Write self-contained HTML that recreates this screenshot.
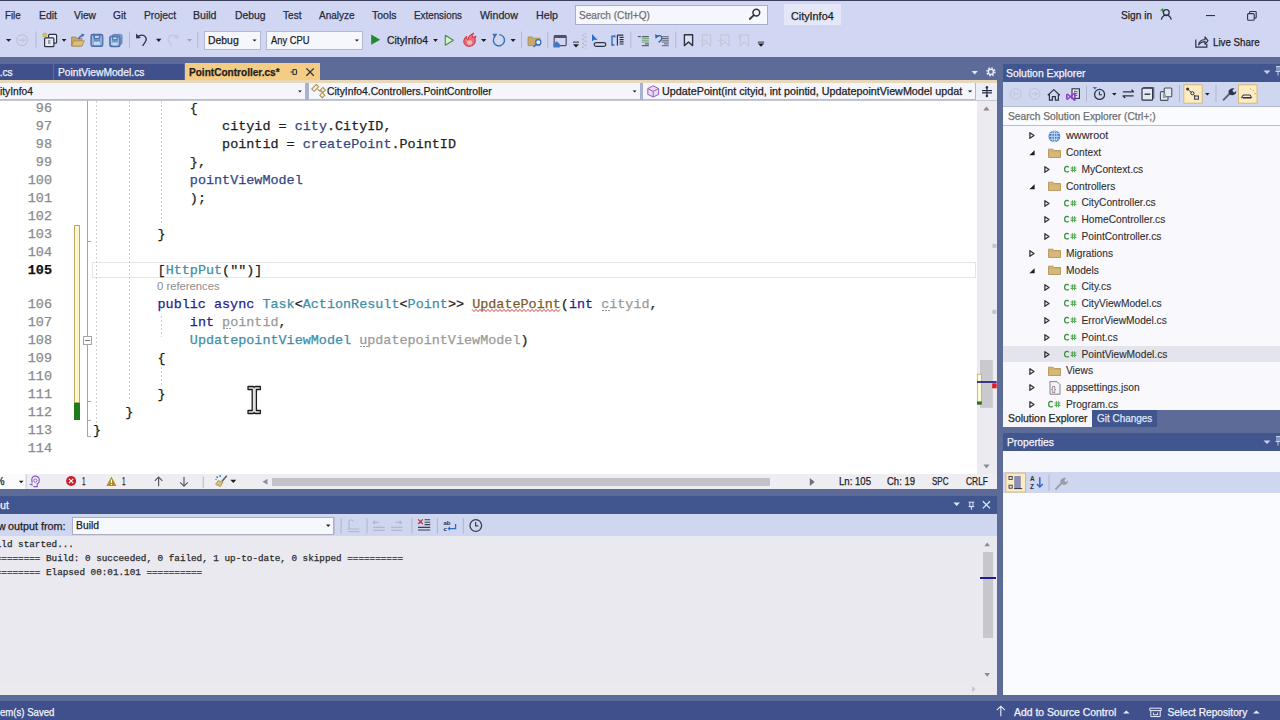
<!DOCTYPE html>
<html><head><meta charset="utf-8"><title>VS</title>
<style>
*{box-sizing:border-box;margin:0;padding:0}
html,body{width:1280px;height:720px;overflow:hidden;position:relative;background:#5d6b99;font-family:"Liberation Sans",sans-serif}
.a{position:absolute}
.t{white-space:pre;line-height:1;-webkit-text-stroke:0.25px currentColor}
.code{font-family:"Liberation Mono",monospace;font-size:13.45px;color:#1e1e1e}
svg{overflow:visible}
</style></head><body>
<div class="a" style="left:0px;top:0px;width:1280px;height:57px;background:#d1d7f2;"></div>
<div class="a" style="left:0px;top:0px;width:1280px;height:1px;background:#3b3f5c;"></div>
<div class="a t" style="left:5.30px;top:10.00px;font-size:10.800px;font-family:'Liberation Sans',sans-serif;font-weight:normal;color:#262a3a;transform:scaleX(0.9021);transform-origin:0 0;">File</div>
<div class="a t" style="left:39.00px;top:10.00px;font-size:10.800px;font-family:'Liberation Sans',sans-serif;font-weight:normal;color:#262a3a;transform:scaleX(0.9672);transform-origin:0 0;">Edit</div>
<div class="a t" style="left:74.00px;top:10.00px;font-size:10.800px;font-family:'Liberation Sans',sans-serif;font-weight:normal;color:#262a3a;transform:scaleX(0.9477);transform-origin:0 0;">View</div>
<div class="a t" style="left:113.00px;top:10.00px;font-size:10.800px;font-family:'Liberation Sans',sans-serif;font-weight:normal;color:#262a3a;transform:scaleX(0.9420);transform-origin:0 0;">Git</div>
<div class="a t" style="left:144.00px;top:10.00px;font-size:10.800px;font-family:'Liberation Sans',sans-serif;font-weight:normal;color:#262a3a;transform:scaleX(0.9520);transform-origin:0 0;">Project</div>
<div class="a t" style="left:193.00px;top:10.00px;font-size:10.800px;font-family:'Liberation Sans',sans-serif;font-weight:normal;color:#262a3a;transform:scaleX(0.9785);transform-origin:0 0;">Build</div>
<div class="a t" style="left:235.00px;top:10.00px;font-size:10.800px;font-family:'Liberation Sans',sans-serif;font-weight:normal;color:#262a3a;transform:scaleX(0.9615);transform-origin:0 0;">Debug</div>
<div class="a t" style="left:283.00px;top:10.00px;font-size:10.800px;font-family:'Liberation Sans',sans-serif;font-weight:normal;color:#262a3a;transform:scaleX(0.9340);transform-origin:0 0;">Test</div>
<div class="a t" style="left:319.00px;top:10.00px;font-size:10.800px;font-family:'Liberation Sans',sans-serif;font-weight:normal;color:#262a3a;transform:scaleX(0.9291);transform-origin:0 0;">Analyze</div>
<div class="a t" style="left:372.00px;top:10.00px;font-size:10.500px;font-family:'Liberation Sans',sans-serif;font-weight:normal;color:#262a3a;">Tools</div>
<div class="a t" style="left:414.00px;top:10.00px;font-size:10.800px;font-family:'Liberation Sans',sans-serif;font-weight:normal;color:#262a3a;transform:scaleX(0.9086);transform-origin:0 0;">Extensions</div>
<div class="a t" style="left:480.00px;top:10.00px;font-size:10.800px;font-family:'Liberation Sans',sans-serif;font-weight:normal;color:#262a3a;transform:scaleX(0.9893);transform-origin:0 0;">Window</div>
<div class="a t" style="left:536.00px;top:10.00px;font-size:10.800px;font-family:'Liberation Sans',sans-serif;font-weight:normal;color:#262a3a;transform:scaleX(0.9904);transform-origin:0 0;">Help</div>
<div class="a" style="left:575px;top:5px;width:193px;height:20px;background:#f6f7fc;border:1px solid #a9aec6"></div>
<div class="a t" style="left:579.00px;top:11.00px;font-size:10.200px;font-family:'Liberation Sans',sans-serif;font-weight:normal;color:#717171;transform:scaleX(0.9902);transform-origin:0 0;">Search (Ctrl+Q)</div>
<div class="a" style="left:784px;top:4px;width:57px;height:21px;background:#e3e7f7;"></div>
<div class="a t" style="left:791.00px;top:12.00px;font-size:10.200px;font-family:'Liberation Sans',sans-serif;font-weight:normal;color:#1e1e1e;transform:scaleX(1.0608);transform-origin:0 0;">CityInfo4</div>
<div class="a t" style="left:1121.00px;top:11.00px;font-size:10.200px;font-family:'Liberation Sans',sans-serif;font-weight:normal;color:#1e1e1e;">Sign in</div>
<div class="a" style="left:204px;top:31px;width:57px;height:19px;background:#f6f7fc;border:1px solid #b3b9cf"></div>
<div class="a t" style="left:208.00px;top:36.00px;font-size:10.200px;font-family:'Liberation Sans',sans-serif;font-weight:normal;color:#1e1e1e;transform:scaleX(1.0230);transform-origin:0 0;">Debug</div>
<div class="a" style="left:266px;top:31px;width:97px;height:19px;background:#f6f7fc;border:1px solid #b3b9cf"></div>
<div class="a t" style="left:270.50px;top:36.00px;font-size:10.200px;font-family:'Liberation Sans',sans-serif;font-weight:normal;color:#1e1e1e;transform:scaleX(0.9178);transform-origin:0 0;">Any CPU</div>
<div class="a t" style="left:387.00px;top:36.00px;font-size:10.200px;font-family:'Liberation Sans',sans-serif;font-weight:normal;color:#1e1e1e;transform:scaleX(1.0186);transform-origin:0 0;">CityInfo4</div>
<div class="a t" style="left:1213.00px;top:38.00px;font-size:10.200px;font-family:'Liberation Sans',sans-serif;font-weight:normal;color:#1e1e1e;transform:scaleX(0.9556);transform-origin:0 0;">Live Share</div>
<div class="a" style="left:0px;top:57px;width:997px;height:26px;background:#5d6b99;"></div>
<div class="a" style="left:0px;top:64px;width:184px;height:16px;background:#40508d;"></div>
<div class="a" style="left:53px;top:64px;width:1px;height:16px;background:#5d6b99;"></div>
<div class="a t" style="left:-3.17px;top:68.00px;font-size:10.200px;font-family:'Liberation Sans',sans-serif;font-weight:normal;color:#eef0fb;">t.cs</div>
<div class="a t" style="left:57.70px;top:68.00px;font-size:10.200px;font-family:'Liberation Sans',sans-serif;font-weight:normal;color:#eef0fb;transform:scaleX(1.0059);transform-origin:0 0;">PointViewModel.cs</div>
<div class="a" style="left:184.5px;top:63px;width:135px;height:17px;background:#f5cc84;"></div>
<div class="a t" style="left:188.80px;top:68.00px;font-size:10.200px;font-family:'Liberation Sans',sans-serif;font-weight:bold;color:#1e1e1e;transform:scaleX(0.9878);transform-origin:0 0;">PointController.cs*</div>
<div class="a" style="left:0px;top:80px;width:997px;height:2.6px;background:#e8d8b8;"></div>
<div class="a" style="left:0px;top:82.6px;width:997px;height:18.4px;background:#b9bdcd;"></div>
<div class="a" style="left:0px;top:82.6px;width:305px;height:16.4px;background:#f5f6fb;"></div>
<div class="a" style="left:309px;top:82.6px;width:331px;height:16.4px;background:#f5f6fb;"></div>
<div class="a" style="left:305px;top:82.6px;width:4px;height:17.4px;background:#a9b3cf;"></div>
<div class="a" style="left:640px;top:82.6px;width:3px;height:17.4px;background:#a9b3cf;"></div>
<div class="a" style="left:643px;top:82.6px;width:333px;height:16.4px;background:#f5f6fb;border-right:1px solid #b4b9cc"></div>
<div class="a" style="left:976px;top:82.6px;width:21px;height:17.4px;background:#eeeef6;"></div>
<div class="a t" style="left:-7.41px;top:87.00px;font-size:10.240px;font-family:'Liberation Sans',sans-serif;font-weight:normal;color:#1e1e1e;">CityInfo4</div>
<div class="a t" style="left:327.00px;top:87.00px;font-size:10.200px;font-family:'Liberation Sans',sans-serif;font-weight:normal;color:#1e1e1e;transform:scaleX(1.0141);transform-origin:0 0;">CityInfo4.Controllers.PointController</div>
<div class="a t" style="left:662.00px;top:87.00px;font-size:10.200px;font-family:'Liberation Sans',sans-serif;font-weight:normal;color:#1e1e1e;transform:scaleX(1.0564);transform-origin:0 0;">UpdatePoint(int cityid, int pointid, UpdatepointViewModel updat</div>
<div class="a" style="left:0px;top:101px;width:997px;height:373px;background:#ffffff;"></div>
<div class="a" style="left:0px;top:100px;width:997px;height:1px;background:#c5c8d4;"></div>
<div class="a t code" style="left:35.86px;top:102.00px;color:#8a8a8a;">96</div>
<div class="a t code" style="left:35.86px;top:120.00px;color:#8a8a8a;">97</div>
<div class="a t code" style="left:35.86px;top:138.00px;color:#8a8a8a;">98</div>
<div class="a t code" style="left:35.86px;top:156.00px;color:#8a8a8a;">99</div>
<div class="a t code" style="left:27.79px;top:174.00px;color:#8a8a8a;">100</div>
<div class="a t code" style="left:27.79px;top:192.00px;color:#8a8a8a;">101</div>
<div class="a t code" style="left:27.79px;top:210.00px;color:#8a8a8a;">102</div>
<div class="a t code" style="left:27.79px;top:228.00px;color:#8a8a8a;">103</div>
<div class="a t code" style="left:27.79px;top:246.00px;color:#8a8a8a;">104</div>
<div class="a t code" style="left:27.79px;top:264.00px;color:#111;font-weight:bold">105</div>
<div class="a t code" style="left:27.79px;top:298.00px;color:#8a8a8a;">106</div>
<div class="a t code" style="left:27.79px;top:316.00px;color:#8a8a8a;">107</div>
<div class="a t code" style="left:27.79px;top:334.00px;color:#8a8a8a;">108</div>
<div class="a t code" style="left:27.79px;top:352.00px;color:#8a8a8a;">109</div>
<div class="a t code" style="left:27.79px;top:370.00px;color:#8a8a8a;">110</div>
<div class="a t code" style="left:27.79px;top:388.00px;color:#8a8a8a;">111</div>
<div class="a t code" style="left:27.79px;top:406.00px;color:#8a8a8a;">112</div>
<div class="a t code" style="left:27.79px;top:424.00px;color:#8a8a8a;">113</div>
<div class="a t code" style="left:27.79px;top:442.00px;color:#8a8a8a;">114</div>
<div class="a" style="left:87px;top:101px;width:1px;height:336px;background:#a5a5a5;"></div>
<div class="a" style="left:87px;top:241px;width:4px;height:1px;background:#a5a5a5;"></div>
<div class="a" style="left:87px;top:401px;width:4px;height:1px;background:#a5a5a5;"></div>
<div class="a" style="left:87px;top:420px;width:4px;height:1px;background:#a5a5a5;"></div>
<div class="a" style="left:87px;top:436px;width:4px;height:1px;background:#a5a5a5;"></div>
<div class="a" style="left:82.5px;top:336px;width:9px;height:9px;background:#ffffff;border:1px solid #a5a5a5"></div>
<div class="a" style="left:84.5px;top:340px;width:5px;height:1px;background:#777;"></div>
<div class="a" style="left:74px;top:225px;width:5.5px;height:178px;background:#fbf6cc;border:1px solid #b8a860"></div>
<div class="a" style="left:74px;top:402.5px;width:5.5px;height:17.5px;background:#1e7b1e;"></div>
<div class="a" style="left:92px;top:262px;width:884px;height:16px;background:transparent;border:1px solid #e6e6e6"></div>
<div class="a" style="left:95.5px;top:101px;width:1px;height:335px;background:transparent;background-image:linear-gradient(#d0d0d0 50%,transparent 50%);background-size:1px 4px"></div>
<div class="a" style="left:128.5px;top:101px;width:1px;height:299px;background:transparent;background-image:linear-gradient(#d0d0d0 50%,transparent 50%);background-size:1px 4px"></div>
<div class="a" style="left:160.5px;top:101px;width:1px;height:122px;background:transparent;background-image:linear-gradient(#d0d0d0 50%,transparent 50%);background-size:1px 4px"></div>
<div class="a" style="left:160.5px;top:316px;width:1px;height:21px;background:transparent;background-image:linear-gradient(#d0d0d0 50%,transparent 50%);background-size:1px 4px"></div>
<div class="a" style="left:160.5px;top:363px;width:1px;height:24px;background:transparent;background-image:linear-gradient(#d0d0d0 50%,transparent 50%);background-size:1px 4px"></div>
<div class="a t code" style="left:189.84px;top:102.00px"><span style="color:#1e1e1e">{</span></div>
<div class="a t code" style="left:222.12px;top:120.00px"><span style="color:#1e1e1e">cityid = </span><span style="color:#35477f">city</span><span style="color:#1e1e1e">.CityID,</span></div>
<div class="a t code" style="left:222.12px;top:138.00px"><span style="color:#1e1e1e">pointid = </span><span style="color:#35477f">createPoint</span><span style="color:#1e1e1e">.PointID</span></div>
<div class="a t code" style="left:189.84px;top:156.00px"><span style="color:#1e1e1e">},</span></div>
<div class="a t code" style="left:189.84px;top:174.00px"><span style="color:#35477f">pointViewModel</span></div>
<div class="a t code" style="left:189.84px;top:192.00px"><span style="color:#1e1e1e">);</span></div>
<div class="a t code" style="left:157.56px;top:228.00px"><span style="color:#1e1e1e">}</span></div>
<div class="a t code" style="left:157.56px;top:264.00px"><span style="color:#1e1e1e">[</span><span style="color:#3d8ea8">HttpPut</span><span style="color:#1e1e1e">(&quot;&quot;)]</span></div>
<div class="a t" style="left:157.30px;top:282.00px;font-size:10.400px;font-family:'Liberation Sans',sans-serif;font-weight:normal;color:#8c8c8c;transform:scaleX(1.0846);transform-origin:0 0;-webkit-text-stroke:0">0 references</div>
<div class="a t code" style="left:157.56px;top:298.00px"><span style="color:#1f1f8f">public async </span><span style="color:#3d8ea8">Task</span><span style="color:#1e1e1e">&lt;</span><span style="color:#3d8ea8">ActionResult</span><span style="color:#1e1e1e">&lt;</span><span style="color:#3d8ea8">Point</span><span style="color:#1e1e1e">&gt;&gt; </span><span style="color:#7a5a2a">UpdatePoint</span><span style="color:#1e1e1e">(</span><span style="color:#1f1f8f">int </span><span style="color:#9a9a9a">cityid</span><span style="color:#1e1e1e">,</span></div>
<div class="a t code" style="left:189.84px;top:316.00px"><span style="color:#1f1f8f">int </span><span style="color:#9a9a9a">pointid</span><span style="color:#1e1e1e">,</span></div>
<div class="a t code" style="left:189.84px;top:334.00px"><span style="color:#3d8ea8">UpdatepointViewModel </span><span style="color:#9a9a9a">updatepointViewModel</span><span style="color:#1e1e1e">)</span></div>
<div class="a t code" style="left:157.56px;top:352.00px"><span style="color:#1e1e1e">{</span></div>
<div class="a t code" style="left:157.56px;top:388.00px"><span style="color:#1e1e1e">}</span></div>
<div class="a t code" style="left:125.28px;top:406.00px"><span style="color:#1e1e1e">}</span></div>
<div class="a t code" style="left:93.0px;top:424.00px"><span style="color:#1e1e1e">}</span></div>
<svg class="a" style="left:472.29px;top:309px;" width="88.77000000000001" height="3" viewBox="0 0 88.77000000000001 3"><polyline points="0,0.3 2,2.6 4,0.3 6,2.6 8,0.3 10,2.6 12,0.3 14,2.6 16,0.3 18,2.6 20,0.3 22,2.6 24,0.3 26,2.6 28,0.3 30,2.6 32,0.3 34,2.6 36,0.3 38,2.6 40,0.3 42,2.6 44,0.3 46,2.6 48,0.3 50,2.6 52,0.3 54,2.6 56,0.3 58,2.6 60,0.3 62,2.6 64,0.3 66,2.6 68,0.3 70,2.6 72,0.3 74,2.6 76,0.3 78,2.6 80,0.3 82,2.6 84,0.3 86,2.6 88,0.3" fill="none" stroke="#d84848" stroke-width="1"/></svg>
<div class="a" style="left:602.4100000000001px;top:310.3px;width:1.5px;height:1.2px;background:#999;"></div>
<div class="a" style="left:605.4100000000001px;top:310.3px;width:1.5px;height:1.2px;background:#999;"></div>
<div class="a" style="left:608.4100000000001px;top:310.3px;width:1.5px;height:1.2px;background:#999;"></div>
<div class="a" style="left:223.12px;top:328.3px;width:1.5px;height:1.2px;background:#999;"></div>
<div class="a" style="left:226.12px;top:328.3px;width:1.5px;height:1.2px;background:#999;"></div>
<div class="a" style="left:229.12px;top:328.3px;width:1.5px;height:1.2px;background:#999;"></div>
<div class="a" style="left:360.31px;top:346.3px;width:1.5px;height:1.2px;background:#999;"></div>
<div class="a" style="left:363.31px;top:346.3px;width:1.5px;height:1.2px;background:#999;"></div>
<div class="a" style="left:366.31px;top:346.3px;width:1.5px;height:1.2px;background:#999;"></div>
<div class="a" style="left:977px;top:101px;width:20px;height:373px;background:#ecebf1;"></div>
<div class="a" style="left:0px;top:474px;width:997px;height:14.5px;background:#eeedf2;"></div>
<div class="a" style="left:0px;top:474px;width:26px;height:15px;background:#fbfbfd;"></div>
<div class="a t" style="left:-4.50px;top:477.00px;font-size:10.200px;font-family:'Liberation Sans',sans-serif;font-weight:normal;color:#1e1e1e;">%</div>
<div class="a t" style="left:82.00px;top:477.00px;font-size:10.200px;font-family:'Liberation Sans',sans-serif;font-weight:normal;color:#1e1e1e;transform:scaleX(0.6170);transform-origin:0 0;">1</div>
<div class="a t" style="left:122.00px;top:477.00px;font-size:10.200px;font-family:'Liberation Sans',sans-serif;font-weight:normal;color:#1e1e1e;transform:scaleX(0.6170);transform-origin:0 0;">1</div>
<div class="a" style="left:203px;top:477px;width:1px;height:11px;background:#c4c4cc;"></div>
<div class="a" style="left:272px;top:477.5px;width:498px;height:8px;background:#c2c3ca;"></div>
<div class="a t" style="left:839.00px;top:477.00px;font-size:10.200px;font-family:'Liberation Sans',sans-serif;font-weight:normal;color:#1e1e1e;transform:scaleX(0.9403);transform-origin:0 0;">Ln: 105</div>
<div class="a t" style="left:887.00px;top:477.00px;font-size:10.200px;font-family:'Liberation Sans',sans-serif;font-weight:normal;color:#1e1e1e;transform:scaleX(0.9317);transform-origin:0 0;">Ch: 19</div>
<div class="a t" style="left:932.00px;top:477.00px;font-size:10.200px;font-family:'Liberation Sans',sans-serif;font-weight:normal;color:#1e1e1e;transform:scaleX(0.7867);transform-origin:0 0;">SPC</div>
<div class="a t" style="left:966.00px;top:477.00px;font-size:10.200px;font-family:'Liberation Sans',sans-serif;font-weight:normal;color:#1e1e1e;transform:scaleX(0.8259);transform-origin:0 0;">CRLF</div>
<div class="a" style="left:0px;top:496.3px;width:997px;height:18px;background:#41558f;"></div>
<div class="a t" style="left:-21.72px;top:501.00px;font-size:10.200px;font-family:'Liberation Sans',sans-serif;font-weight:normal;color:#f2f4fc;">Output</div>
<div class="a" style="left:0px;top:514.3px;width:997px;height:22px;background:#cfd6f0;"></div>
<div class="a t" style="left:8.40px;top:522.00px;font-size:10.200px;font-family:'Liberation Sans',sans-serif;font-weight:normal;color:#1e1e1e;transform:scaleX(1.0583);transform-origin:0 0;">output from:</div>
<div class="a t" style="left:-19.95px;top:522.00px;font-size:10.200px;font-family:'Liberation Sans',sans-serif;font-weight:normal;color:#1e1e1e;">Show </div>
<div class="a" style="left:72px;top:517px;width:262px;height:17.5px;background:#f7f8fc;border:1px solid #a9aec4"></div>
<div class="a t" style="left:75.90px;top:521.00px;font-size:10.200px;font-family:'Liberation Sans',sans-serif;font-weight:normal;color:#1e1e1e;transform:scaleX(1.0140);transform-origin:0 0;">Build</div>
<div class="a" style="left:0px;top:536.3px;width:997px;height:158.7px;background:#e9e9ef;"></div>
<div class="a" style="left:0px;top:683px;width:997px;height:12px;background:#ece9ef;"></div>
<div class="a t" style="left:-15.4px;top:540px;font-family:'Liberation Mono',monospace;font-size:9.300px;color:#2b2b2b">Build started...</div>
<div class="a t" style="left:-15.4px;top:554px;font-family:'Liberation Mono',monospace;font-size:9.300px;color:#2b2b2b">========== Build: 0 succeeded, 0 failed, 1 up-to-date, 0 skipped ==========</div>
<div class="a t" style="left:-15.4px;top:568px;font-family:'Liberation Mono',monospace;font-size:9.300px;color:#2b2b2b">========== Elapsed 00:01.101 ==========</div>
<div class="a" style="left:980px;top:537px;width:17px;height:146px;background:#e9e9ef;"></div>
<div class="a" style="left:983px;top:552.4px;width:10px;height:85.6px;background:#c6c6cc;"></div>
<div class="a" style="left:980px;top:577px;width:16px;height:1.5px;background:#1a1aa0;"></div>
<div class="a" style="left:0px;top:700.5px;width:1280px;height:19.5px;background:#40508d;"></div>
<div class="a t" style="left:0.00px;top:708.00px;font-size:10.200px;font-family:'Liberation Sans',sans-serif;font-weight:normal;color:#f2f4fc;transform:scaleX(0.9408);transform-origin:0 0;">em(s) Saved</div>
<div class="a t" style="left:1014.00px;top:708.00px;font-size:10.200px;font-family:'Liberation Sans',sans-serif;font-weight:normal;color:#f2f4fc;transform:scaleX(1.0203);transform-origin:0 0;">Add to Source Control</div>
<div class="a t" style="left:1167.50px;top:708.00px;font-size:10.200px;font-family:'Liberation Sans',sans-serif;font-weight:normal;color:#f2f4fc;">Select Repository</div>
<div class="a" style="left:1003px;top:64px;width:277px;height:18px;background:#41558f;"></div>
<div class="a t" style="left:1006.40px;top:69.00px;font-size:10.200px;font-family:'Liberation Sans',sans-serif;font-weight:normal;color:#f2f4fc;transform:scaleX(1.0247);transform-origin:0 0;">Solution Explorer</div>
<svg class="a" style="left:1263px;top:70px;" width="8" height="5" viewBox="0 0 8 5"><path d="M0.5,0.5 h7 l-3.5,3.6 z" fill="#c8d2f2"/></svg>
<svg class="a" style="left:1275px;top:66px;" width="6" height="11" viewBox="0 0 6 11"><path d="M1,0.5 h4 M2,0.5 v5 h2 v-5 M0.5,5.5 h5 M3,5.5 v4" fill="none" stroke="#c8d2f2" stroke-width="1"/></svg>
<div class="a" style="left:1003px;top:82px;width:277px;height:24px;background:#cfd6f0;"></div>
<div class="a" style="left:1003px;top:106px;width:277px;height:1px;background:#b4b9cc;"></div>
<div class="a" style="left:1003px;top:107px;width:277px;height:18px;background:#fafbfe;"></div>
<div class="a" style="left:1003px;top:124.5px;width:277px;height:1.5px;background:#b9bdcc;"></div>
<div class="a t" style="left:1008.00px;top:112.00px;font-size:10.200px;font-family:'Liberation Sans',sans-serif;font-weight:normal;color:#707070;transform:scaleX(1.0047);transform-origin:0 0;">Search Solution Explorer (Ctrl+;)</div>
<div class="a" style="left:1003px;top:126px;width:277px;height:283.5px;background:#f9f9fd;"></div>
<div class="a" style="left:1003px;top:345.5px;width:277px;height:16.3px;background:#e3e4ec;"></div>
<svg class="a" style="left:1028.5px;top:132.29999999999998px;" width="7" height="8" viewBox="0 0 7 8"><path d="M0.9,0.7 L5,3.5 L0.9,6.3 Z" fill="none" stroke="#333" stroke-width="1.3" stroke-linejoin="round"/></svg>
<svg class="a" style="left:1048px;top:129.79999999999998px;" width="13" height="13" viewBox="0 0 13 13"><circle cx="6.4" cy="6.3" r="5.9" fill="#3f7fcf"/><g stroke="#dbe8f8" stroke-width="0.8" fill="none"><ellipse cx="6.4" cy="6.3" rx="2.6" ry="5.9"/><path d="M0.7,6.3 h11.4 M1.5,3.4 h9.8 M1.5,9.2 h9.8 M6.4,0.4 v11.8"/></g></svg>
<div class="a t" style="left:1066.00px;top:131.00px;font-size:10.200px;font-family:'Liberation Sans',sans-serif;font-weight:normal;color:#2e2e2e;transform:scaleX(1.0661);transform-origin:0 0;-webkit-text-stroke:0.1px currentColor">wwwroot</div>
<svg class="a" style="left:1028.75px;top:150.4px;" width="6" height="6" viewBox="0 0 6 6"><path d="M5.6,0.3 L5.6,5.2 L0.4,5.2 Z" fill="#1e1e1e"/></svg>
<svg class="a" style="left:1048px;top:147.5px;" width="13" height="10" viewBox="0 0 13 10"><path d="M0.5,1.2 h4.5 l1.2,1.3 h6.3 v7 h-12 Z" fill="#d8b878" stroke="#b39555" stroke-width="0.9"/><path d="M0.5,3.2 h12" stroke="#c4a462" stroke-width="0.6"/></svg>
<div class="a t" style="left:1066.00px;top:148.00px;font-size:10.200px;font-family:'Liberation Sans',sans-serif;font-weight:normal;color:#2e2e2e;-webkit-text-stroke:0.1px currentColor">Context</div>
<svg class="a" style="left:1044.0px;top:165.89999999999998px;" width="7" height="8" viewBox="0 0 7 8"><path d="M0.9,0.7 L5,3.5 L0.9,6.3 Z" fill="none" stroke="#333" stroke-width="1.3" stroke-linejoin="round"/></svg>
<svg class="a" style="left:1063.8px;top:165.89999999999998px;" width="14" height="8" viewBox="0 0 14 8"><path d="M4.8,1.2 Q3.8,0.3 2.8,0.4 Q0.6,0.6 0.6,3.2 Q0.6,5.8 2.8,6 Q3.8,6.1 4.8,5.2" fill="none" stroke="#3c8f3c" stroke-width="1.2"/><path d="M6.6,2 h5.8 M6.6,4.4 h5.8 M8.4,0.2 v6 M10.6,0.2 v6" stroke="#5aa85a" stroke-width="1.1"/></svg>
<div class="a t" style="left:1081.50px;top:165.00px;font-size:10.200px;font-family:'Liberation Sans',sans-serif;font-weight:normal;color:#2e2e2e;-webkit-text-stroke:0.1px currentColor">MyContext.cs</div>
<svg class="a" style="left:1028.75px;top:184.0px;" width="6" height="6" viewBox="0 0 6 6"><path d="M5.6,0.3 L5.6,5.2 L0.4,5.2 Z" fill="#1e1e1e"/></svg>
<svg class="a" style="left:1048px;top:181.1px;" width="13" height="10" viewBox="0 0 13 10"><path d="M0.5,1.2 h4.5 l1.2,1.3 h6.3 v7 h-12 Z" fill="#d8b878" stroke="#b39555" stroke-width="0.9"/><path d="M0.5,3.2 h12" stroke="#c4a462" stroke-width="0.6"/></svg>
<div class="a t" style="left:1066.00px;top:182.00px;font-size:10.200px;font-family:'Liberation Sans',sans-serif;font-weight:normal;color:#2e2e2e;-webkit-text-stroke:0.1px currentColor">Controllers</div>
<svg class="a" style="left:1044.0px;top:199.5px;" width="7" height="8" viewBox="0 0 7 8"><path d="M0.9,0.7 L5,3.5 L0.9,6.3 Z" fill="none" stroke="#333" stroke-width="1.3" stroke-linejoin="round"/></svg>
<svg class="a" style="left:1063.8px;top:199.5px;" width="14" height="8" viewBox="0 0 14 8"><path d="M4.8,1.2 Q3.8,0.3 2.8,0.4 Q0.6,0.6 0.6,3.2 Q0.6,5.8 2.8,6 Q3.8,6.1 4.8,5.2" fill="none" stroke="#3c8f3c" stroke-width="1.2"/><path d="M6.6,2 h5.8 M6.6,4.4 h5.8 M8.4,0.2 v6 M10.6,0.2 v6" stroke="#5aa85a" stroke-width="1.1"/></svg>
<div class="a t" style="left:1081.50px;top:198.00px;font-size:10.200px;font-family:'Liberation Sans',sans-serif;font-weight:normal;color:#2e2e2e;-webkit-text-stroke:0.1px currentColor">CityController.cs</div>
<svg class="a" style="left:1044.0px;top:216.29999999999998px;" width="7" height="8" viewBox="0 0 7 8"><path d="M0.9,0.7 L5,3.5 L0.9,6.3 Z" fill="none" stroke="#333" stroke-width="1.3" stroke-linejoin="round"/></svg>
<svg class="a" style="left:1063.8px;top:216.29999999999998px;" width="14" height="8" viewBox="0 0 14 8"><path d="M4.8,1.2 Q3.8,0.3 2.8,0.4 Q0.6,0.6 0.6,3.2 Q0.6,5.8 2.8,6 Q3.8,6.1 4.8,5.2" fill="none" stroke="#3c8f3c" stroke-width="1.2"/><path d="M6.6,2 h5.8 M6.6,4.4 h5.8 M8.4,0.2 v6 M10.6,0.2 v6" stroke="#5aa85a" stroke-width="1.1"/></svg>
<div class="a t" style="left:1081.50px;top:215.00px;font-size:10.200px;font-family:'Liberation Sans',sans-serif;font-weight:normal;color:#2e2e2e;-webkit-text-stroke:0.1px currentColor">HomeController.cs</div>
<svg class="a" style="left:1044.0px;top:233.1px;" width="7" height="8" viewBox="0 0 7 8"><path d="M0.9,0.7 L5,3.5 L0.9,6.3 Z" fill="none" stroke="#333" stroke-width="1.3" stroke-linejoin="round"/></svg>
<svg class="a" style="left:1063.8px;top:233.1px;" width="14" height="8" viewBox="0 0 14 8"><path d="M4.8,1.2 Q3.8,0.3 2.8,0.4 Q0.6,0.6 0.6,3.2 Q0.6,5.8 2.8,6 Q3.8,6.1 4.8,5.2" fill="none" stroke="#3c8f3c" stroke-width="1.2"/><path d="M6.6,2 h5.8 M6.6,4.4 h5.8 M8.4,0.2 v6 M10.6,0.2 v6" stroke="#5aa85a" stroke-width="1.1"/></svg>
<div class="a t" style="left:1081.50px;top:232.00px;font-size:10.200px;font-family:'Liberation Sans',sans-serif;font-weight:normal;color:#2e2e2e;-webkit-text-stroke:0.1px currentColor">PointController.cs</div>
<svg class="a" style="left:1028.5px;top:249.89999999999998px;" width="7" height="8" viewBox="0 0 7 8"><path d="M0.9,0.7 L5,3.5 L0.9,6.3 Z" fill="none" stroke="#333" stroke-width="1.3" stroke-linejoin="round"/></svg>
<svg class="a" style="left:1048px;top:248.29999999999998px;" width="13" height="10" viewBox="0 0 13 10"><path d="M0.5,1.2 h4.5 l1.2,1.3 h6.3 v7 h-12 Z" fill="#d8b878" stroke="#b39555" stroke-width="0.9"/><path d="M0.5,3.2 h12" stroke="#c4a462" stroke-width="0.6"/></svg>
<div class="a t" style="left:1066.00px;top:249.00px;font-size:10.200px;font-family:'Liberation Sans',sans-serif;font-weight:normal;color:#2e2e2e;-webkit-text-stroke:0.1px currentColor">Migrations</div>
<svg class="a" style="left:1028.75px;top:268.0px;" width="6" height="6" viewBox="0 0 6 6"><path d="M5.6,0.3 L5.6,5.2 L0.4,5.2 Z" fill="#1e1e1e"/></svg>
<svg class="a" style="left:1048px;top:265.1px;" width="13" height="10" viewBox="0 0 13 10"><path d="M0.5,1.2 h4.5 l1.2,1.3 h6.3 v7 h-12 Z" fill="#d8b878" stroke="#b39555" stroke-width="0.9"/><path d="M0.5,3.2 h12" stroke="#c4a462" stroke-width="0.6"/></svg>
<div class="a t" style="left:1066.00px;top:266.00px;font-size:10.200px;font-family:'Liberation Sans',sans-serif;font-weight:normal;color:#2e2e2e;-webkit-text-stroke:0.1px currentColor">Models</div>
<svg class="a" style="left:1044.0px;top:283.5px;" width="7" height="8" viewBox="0 0 7 8"><path d="M0.9,0.7 L5,3.5 L0.9,6.3 Z" fill="none" stroke="#333" stroke-width="1.3" stroke-linejoin="round"/></svg>
<svg class="a" style="left:1063.8px;top:283.5px;" width="14" height="8" viewBox="0 0 14 8"><path d="M4.8,1.2 Q3.8,0.3 2.8,0.4 Q0.6,0.6 0.6,3.2 Q0.6,5.8 2.8,6 Q3.8,6.1 4.8,5.2" fill="none" stroke="#3c8f3c" stroke-width="1.2"/><path d="M6.6,2 h5.8 M6.6,4.4 h5.8 M8.4,0.2 v6 M10.6,0.2 v6" stroke="#5aa85a" stroke-width="1.1"/></svg>
<div class="a t" style="left:1081.50px;top:282.00px;font-size:10.200px;font-family:'Liberation Sans',sans-serif;font-weight:normal;color:#2e2e2e;-webkit-text-stroke:0.1px currentColor">City.cs</div>
<svg class="a" style="left:1044.0px;top:300.3px;" width="7" height="8" viewBox="0 0 7 8"><path d="M0.9,0.7 L5,3.5 L0.9,6.3 Z" fill="none" stroke="#333" stroke-width="1.3" stroke-linejoin="round"/></svg>
<svg class="a" style="left:1063.8px;top:300.3px;" width="14" height="8" viewBox="0 0 14 8"><path d="M4.8,1.2 Q3.8,0.3 2.8,0.4 Q0.6,0.6 0.6,3.2 Q0.6,5.8 2.8,6 Q3.8,6.1 4.8,5.2" fill="none" stroke="#3c8f3c" stroke-width="1.2"/><path d="M6.6,2 h5.8 M6.6,4.4 h5.8 M8.4,0.2 v6 M10.6,0.2 v6" stroke="#5aa85a" stroke-width="1.1"/></svg>
<div class="a t" style="left:1081.50px;top:299.00px;font-size:10.200px;font-family:'Liberation Sans',sans-serif;font-weight:normal;color:#2e2e2e;-webkit-text-stroke:0.1px currentColor">CityViewModel.cs</div>
<svg class="a" style="left:1044.0px;top:317.09999999999997px;" width="7" height="8" viewBox="0 0 7 8"><path d="M0.9,0.7 L5,3.5 L0.9,6.3 Z" fill="none" stroke="#333" stroke-width="1.3" stroke-linejoin="round"/></svg>
<svg class="a" style="left:1063.8px;top:317.09999999999997px;" width="14" height="8" viewBox="0 0 14 8"><path d="M4.8,1.2 Q3.8,0.3 2.8,0.4 Q0.6,0.6 0.6,3.2 Q0.6,5.8 2.8,6 Q3.8,6.1 4.8,5.2" fill="none" stroke="#3c8f3c" stroke-width="1.2"/><path d="M6.6,2 h5.8 M6.6,4.4 h5.8 M8.4,0.2 v6 M10.6,0.2 v6" stroke="#5aa85a" stroke-width="1.1"/></svg>
<div class="a t" style="left:1081.50px;top:316.00px;font-size:10.200px;font-family:'Liberation Sans',sans-serif;font-weight:normal;color:#2e2e2e;-webkit-text-stroke:0.1px currentColor">ErrorViewModel.cs</div>
<svg class="a" style="left:1044.0px;top:333.90000000000003px;" width="7" height="8" viewBox="0 0 7 8"><path d="M0.9,0.7 L5,3.5 L0.9,6.3 Z" fill="none" stroke="#333" stroke-width="1.3" stroke-linejoin="round"/></svg>
<svg class="a" style="left:1063.8px;top:333.90000000000003px;" width="14" height="8" viewBox="0 0 14 8"><path d="M4.8,1.2 Q3.8,0.3 2.8,0.4 Q0.6,0.6 0.6,3.2 Q0.6,5.8 2.8,6 Q3.8,6.1 4.8,5.2" fill="none" stroke="#3c8f3c" stroke-width="1.2"/><path d="M6.6,2 h5.8 M6.6,4.4 h5.8 M8.4,0.2 v6 M10.6,0.2 v6" stroke="#5aa85a" stroke-width="1.1"/></svg>
<div class="a t" style="left:1081.50px;top:333.00px;font-size:10.200px;font-family:'Liberation Sans',sans-serif;font-weight:normal;color:#2e2e2e;-webkit-text-stroke:0.1px currentColor">Point.cs</div>
<svg class="a" style="left:1044.0px;top:350.7px;" width="7" height="8" viewBox="0 0 7 8"><path d="M0.9,0.7 L5,3.5 L0.9,6.3 Z" fill="none" stroke="#333" stroke-width="1.3" stroke-linejoin="round"/></svg>
<svg class="a" style="left:1063.8px;top:350.7px;" width="14" height="8" viewBox="0 0 14 8"><path d="M4.8,1.2 Q3.8,0.3 2.8,0.4 Q0.6,0.6 0.6,3.2 Q0.6,5.8 2.8,6 Q3.8,6.1 4.8,5.2" fill="none" stroke="#3c8f3c" stroke-width="1.2"/><path d="M6.6,2 h5.8 M6.6,4.4 h5.8 M8.4,0.2 v6 M10.6,0.2 v6" stroke="#5aa85a" stroke-width="1.1"/></svg>
<div class="a t" style="left:1081.50px;top:350.00px;font-size:10.200px;font-family:'Liberation Sans',sans-serif;font-weight:normal;color:#2e2e2e;-webkit-text-stroke:0.1px currentColor">PointViewModel.cs</div>
<svg class="a" style="left:1028.5px;top:367.5px;" width="7" height="8" viewBox="0 0 7 8"><path d="M0.9,0.7 L5,3.5 L0.9,6.3 Z" fill="none" stroke="#333" stroke-width="1.3" stroke-linejoin="round"/></svg>
<svg class="a" style="left:1048px;top:365.90000000000003px;" width="13" height="10" viewBox="0 0 13 10"><path d="M0.5,1.2 h4.5 l1.2,1.3 h6.3 v7 h-12 Z" fill="#d8b878" stroke="#b39555" stroke-width="0.9"/><path d="M0.5,3.2 h12" stroke="#c4a462" stroke-width="0.6"/></svg>
<div class="a t" style="left:1066.00px;top:366.00px;font-size:10.200px;font-family:'Liberation Sans',sans-serif;font-weight:normal;color:#2e2e2e;-webkit-text-stroke:0.1px currentColor">Views</div>
<svg class="a" style="left:1028.5px;top:384.3px;" width="7" height="8" viewBox="0 0 7 8"><path d="M0.9,0.7 L5,3.5 L0.9,6.3 Z" fill="none" stroke="#333" stroke-width="1.3" stroke-linejoin="round"/></svg>
<svg class="a" style="left:1049px;top:381.1px;" width="12" height="14" viewBox="0 0 12 14"><path d="M1,0.6 h7 l3,3 v9.6 h-10 Z" fill="#f4f4f6" stroke="#777" stroke-width="0.9"/><text x="2.2" y="10.4" font-family="Liberation Sans" font-size="7" fill="#555">{}</text></svg>
<div class="a t" style="left:1066.00px;top:383.00px;font-size:10.200px;font-family:'Liberation Sans',sans-serif;font-weight:normal;color:#2e2e2e;-webkit-text-stroke:0.1px currentColor">appsettings.json</div>
<svg class="a" style="left:1028.5px;top:401.09999999999997px;" width="7" height="8" viewBox="0 0 7 8"><path d="M0.9,0.7 L5,3.5 L0.9,6.3 Z" fill="none" stroke="#333" stroke-width="1.3" stroke-linejoin="round"/></svg>
<svg class="a" style="left:1048.3px;top:401.09999999999997px;" width="14" height="8" viewBox="0 0 14 8"><path d="M4.8,1.2 Q3.8,0.3 2.8,0.4 Q0.6,0.6 0.6,3.2 Q0.6,5.8 2.8,6 Q3.8,6.1 4.8,5.2" fill="none" stroke="#3c8f3c" stroke-width="1.2"/><path d="M6.6,2 h5.8 M6.6,4.4 h5.8 M8.4,0.2 v6 M10.6,0.2 v6" stroke="#5aa85a" stroke-width="1.1"/></svg>
<div class="a t" style="left:1066.00px;top:400.00px;font-size:10.200px;font-family:'Liberation Sans',sans-serif;font-weight:normal;color:#2e2e2e;-webkit-text-stroke:0.1px currentColor">Program.cs</div>
<div class="a" style="left:1003px;top:409.5px;width:277px;height:17px;background:#5d6b99;"></div>
<div class="a" style="left:1003px;top:409.5px;width:89px;height:17px;background:#f5f6fc;"></div>
<div class="a" style="left:1092px;top:409.5px;width:65px;height:17px;background:#41558f;"></div>
<div class="a t" style="left:1008.00px;top:414.00px;font-size:10.200px;font-family:'Liberation Sans',sans-serif;font-weight:normal;color:#2a2a2a;transform:scaleX(1.0234);transform-origin:0 0;">Solution Explorer</div>
<div class="a t" style="left:1097.40px;top:414.00px;font-size:10.200px;font-family:'Liberation Sans',sans-serif;font-weight:normal;color:#dfe6fb;transform:scaleX(0.9753);transform-origin:0 0;">Git Changes</div>
<div class="a" style="left:1003px;top:433.2px;width:277px;height:18px;background:#41558f;"></div>
<div class="a t" style="left:1006.50px;top:438.00px;font-size:10.200px;font-family:'Liberation Sans',sans-serif;font-weight:normal;color:#f2f4fc;transform:scaleX(1.0088);transform-origin:0 0;">Properties</div>
<svg class="a" style="left:1263px;top:439.5px;" width="8" height="5" viewBox="0 0 8 5"><path d="M0.5,0.5 h7 l-3.5,3.6 z" fill="#c8d2f2"/></svg>
<svg class="a" style="left:1275px;top:436px;" width="6" height="11" viewBox="0 0 6 11"><path d="M1,0.5 h4 M2,0.5 v5 h2 v-5 M0.5,5.5 h5 M3,5.5 v4" fill="none" stroke="#c8d2f2" stroke-width="1"/></svg>
<div class="a" style="left:1003px;top:451.2px;width:277px;height:21px;background:#f7f8fd;"></div>
<div class="a" style="left:1003px;top:472.2px;width:277px;height:21px;background:#cfd6f0;"></div>
<div class="a" style="left:1003px;top:493.4px;width:277px;height:201.6px;background:#fafbfe;"></div>
<svg class="a" style="left:0;top:0" width="1280" height="720" viewBox="0 0 1280 720"><circle cx="756.3" cy="12.6" r="3.4" fill="none" stroke="#2d3247" stroke-width="1.5"/><path d="M753.8,15.2 L749.8,19" stroke="#2d3247" stroke-width="1.8" stroke-linecap="round"/><path d="M1160.5,10.2 h4 M1162.5,8.2 v4" stroke="#3a9a3a" stroke-width="1.2"/><circle cx="1166.3" cy="12.6" r="2.9" fill="none" stroke="#2d3247" stroke-width="1.3"/><path d="M1161.3,19.6 Q1162.5,15.2 1166.3,15.2 Q1170,15.2 1171.3,19.6" fill="none" stroke="#2d3247" stroke-width="1.3"/><rect x="1206" y="15" width="9" height="1.1" fill="#2d3247"/><rect x="1247.6" y="13.6" width="6.6" height="6.6" rx="1" fill="none" stroke="#2d3247" stroke-width="1.1"/><path d="M1249.6,13.4 v-1.1 a0.8,0.8 0 0 1 0.8,-0.8 h5 a0.8,0.8 0 0 1 0.8,0.8 v5 a0.8,0.8 0 0 1 -0.8,0.8 h-1.2" fill="none" stroke="#2d3247" stroke-width="1.1"/><path d="M1195.8,39.5 v7.7 h11 v-3.5" fill="none" stroke="#2d3247" stroke-width="1.2"/><path d="M1198.5,45 Q1199.5,39.5 1205,39.8 v-3 l3,3.8 l-3,3.8 v-2.8 Q1201,41.6 1198.5,45 Z" fill="none" stroke="#2d3247" stroke-width="1.1" stroke-linejoin="round"/><path d="M5.9,38.9 L11.3,38.9 L8.600000000000001,41.8 Z" fill="#1e1e1e"/><circle cx="22" cy="40.1" r="5.4" fill="none" stroke="#b9bdcc" stroke-width="1"/><path d="M19,40.1 h5.5 M22.5,38 l2.2,2.1 l-2.2,2.1" fill="none" stroke="#b9bdcc" stroke-width="1"/><rect x="35.5" y="31.5" width="1" height="16.0" fill="#b3b8cd"/><rect x="48.6" y="34.4" width="8" height="8.8" rx="1" fill="#e9ebf3" stroke="#2d3247" stroke-width="1.2"/><rect x="44.6" y="37.8" width="9.3" height="8.9" rx="1" fill="#e9ebf3" stroke="#2d3247" stroke-width="1.2"/><rect x="48" y="40" width="2.5" height="4" fill="#9aa0b4"/><circle cx="44.7" cy="35" r="2" fill="#d9c35a" stroke="#b8a03a" stroke-width="0.6"/><path d="M61.7,38.9 L66.4,38.9 L64.05000000000001,41.8 Z" fill="#1e1e1e"/><path d="M71.6,37 h4 l1.2,1.3 h5 v7.7 h-10.2 Z" fill="#c9a763" stroke="#9f8040" stroke-width="0.8"/><path d="M71.6,46 l2.2,-5.2 h10.6 l-2.4,5.2 Z" fill="#dcc083" stroke="#a8894a" stroke-width="0.8"/><path d="M78.6,39.2 Q80,35.6 83.2,35" fill="none" stroke="#3b73c0" stroke-width="1.3"/><path d="M81.4,33.6 L84.6,34.6 L82.6,37.2 Z" fill="#3b73c0"/><rect x="91" y="34.4" width="11.8" height="12" rx="1.6" fill="#6a91c7" stroke="#4b6ea6" stroke-width="1.2"/><rect x="92.2" y="36.0" width="1.2" height="8.8" fill="#a9c3ea"/><rect x="100.39999999999999" y="36.0" width="1.2" height="8.8" fill="#a9c3ea"/><rect x="93.596" y="34.8" width="6.608000000000001" height="3.96" rx="1" fill="#4d72ab"/><rect x="94.894" y="35.8" width="4.0120000000000005" height="2.04" fill="#c3d8f5"/><rect x="93.832" y="41.599999999999994" width="6.136000000000001" height="3.4799999999999995" fill="#c3d8f5"/><rect x="112.4" y="34.4" width="9.6" height="9.8" rx="1.4" fill="#87a6d4" stroke="#6283b8" stroke-width="1"/><rect x="109.8" y="36" width="10.2" height="10.6" rx="1.6" fill="#6a91c7" stroke="#4b6ea6" stroke-width="1.2"/><rect x="111.0" y="37.6" width="1.2" height="7.3999999999999995" fill="#a9c3ea"/><rect x="117.6" y="37.6" width="1.2" height="7.3999999999999995" fill="#a9c3ea"/><rect x="112.044" y="36.4" width="5.712" height="3.498" rx="1" fill="#4d72ab"/><rect x="113.166" y="37.4" width="3.468" height="1.802" fill="#c3d8f5"/><rect x="112.24799999999999" y="42.36" width="5.303999999999999" height="3.074" fill="#c3d8f5"/><rect x="129" y="31.5" width="1" height="16.200000000000003" fill="#b3b8cd"/><path d="M137.2,37.2 Q141,33.8 144.6,36 Q147.6,38.8 145,42.4 L142.6,45.8" fill="none" stroke="#2d3247" stroke-width="1.3"/><path d="M136,33.6 L136.2,38.6 L141,38 Z" fill="#2d3247"/><path d="M156,38.8 L161.4,38.8 L158.7,41.9 Z" fill="#1e1e1e"/><path d="M177.2,37.2 Q173.4,33.8 169.8,36 Q166.8,38.8 169.4,42.4 L171.8,45.8" fill="none" stroke="#c3c7d6" stroke-width="1.2"/><path d="M178.4,33.6 L178.2,38.6 L173.4,38 Z" fill="#c3c7d6"/><path d="M187,38.9 L192,38.9 L189.5,41.8 Z" fill="#9ea2b4"/><rect x="197.3" y="31.5" width="1" height="16.0" fill="#b3b8cd"/><path d="M252.5,39.4 L256.6,39.4 L254.55,41.6 Z" fill="#1e1e1e"/><path d="M354.8,39.4 L359,39.4 L356.9,41.6 Z" fill="#1e1e1e"/><path d="M371.2,34.6 L380.2,39.7 L371.2,44.8 Z" fill="#1f8a2a"/><path d="M433.2,39 L437.8,39 L435.5,41.9 Z" fill="#1e1e1e"/><path d="M445.3,35.2 L453.4,40.2 L445.3,45.2 Z" fill="#d5ecd5" stroke="#3f9447" stroke-width="1.1" stroke-linejoin="round"/><path d="M468.6,46.4 Q463.4,45.6 463.8,40.6 Q464.4,37.6 466.6,36.2 Q466.2,38.8 467.8,39.6 Q468,35.4 473.8,33 Q471.4,35.6 472.8,37.6 Q474,36.6 476,36.2 Q474.6,38.2 475.2,41 Q475.6,45.8 468.6,46.4 Z" fill="#e4707c" stroke="#c8283c" stroke-width="0.9"/><ellipse cx="469.6" cy="42.6" rx="2.6" ry="2.4" fill="#f6b4bc"/><path d="M481,39 L486.4,39 L483.7,41.9 Z" fill="#1e1e1e"/><path d="M494.8,36.4 A5.6,5.6 0 1 0 499.2,34.6" fill="none" stroke="#3a72b8" stroke-width="1.4"/><path d="M492.4,33.8 L497.4,33.8 L494.6,38.2 Z" fill="#3a72b8"/><path d="M510.5,39 L515.7,39 L513.1,41.9 Z" fill="#1e1e1e"/><rect x="521" y="31.5" width="1" height="16.5" fill="#b3b8cd"/><path d="M528,37 h4.4 l1.2,1.2 h6.4 v7.4 h-12 Z" fill="#c9a96a" stroke="#a8894d" stroke-width="0.8"/><circle cx="538.3" cy="42.2" r="2.6" fill="#e8eef8" stroke="#2f6cc0" stroke-width="1.2"/><path d="M536.3,44.3 L533.5,47" stroke="#2f6cc0" stroke-width="1.4"/><rect x="547.3" y="31.5" width="1" height="16.5" fill="#b3b8cd"/><rect x="554.2" y="35.6" width="12" height="10" rx="1" fill="none" stroke="#4d5263" stroke-width="1.2"/><rect x="554.2" y="35.6" width="12" height="2.4" fill="#4d5263"/><path d="M553.4,44 L556.6,41.2 L559.8,44 v3.4 h-6.4 Z" fill="#3e78c8"/><rect x="573" y="41.6" width="6" height="1" fill="#2d3247"/><path d="M573,44.2 L579,44.2 L576.0,47.4 Z" fill="#1e1e1e"/><rect x="584.5" y="33" width="2" height="1.2" fill="#b9bccb"/><rect x="582.0" y="34" width="2" height="1" fill="#c8cbd8"/><rect x="582" y="35" width="2" height="1.2" fill="#b9bccb"/><rect x="584.5" y="36" width="2" height="1" fill="#c8cbd8"/><rect x="584.5" y="37" width="2" height="1.2" fill="#b9bccb"/><rect x="582.0" y="38" width="2" height="1" fill="#c8cbd8"/><rect x="582" y="39" width="2" height="1.2" fill="#b9bccb"/><rect x="584.5" y="40" width="2" height="1" fill="#c8cbd8"/><rect x="584.5" y="41" width="2" height="1.2" fill="#b9bccb"/><rect x="582.0" y="42" width="2" height="1" fill="#c8cbd8"/><rect x="582" y="43" width="2" height="1.2" fill="#b9bccb"/><rect x="584.5" y="44" width="2" height="1" fill="#c8cbd8"/><rect x="584.5" y="45" width="2" height="1.2" fill="#b9bccb"/><rect x="582.0" y="46" width="2" height="1" fill="#c8cbd8"/><rect x="582" y="47" width="2" height="1.2" fill="#b9bccb"/><rect x="584.5" y="48" width="2" height="1" fill="#c8cbd8"/><rect x="594.2" y="42.6" width="11.6" height="3.8" rx="1.9" fill="none" stroke="#2d3247" stroke-width="1.2"/><path d="M592,34 L592,41.6 L594,39.8 L597.6,40 Z" fill="#2e6bc4"/><path d="M614.4,36.2 h-2.4 v8.8 h2.4" fill="none" stroke="#2e6bc4" stroke-width="1.4"/><path d="M613.4,36.4 L615.4,34.4 L615.4,38" fill="#2e6bc4"/><path d="M617.4,35 v10.6 M617.4,35.2 h6 M619.6,37.4 h4 M619.6,39.6 h4 M619.6,41.8 h4 M619.6,44 h4" stroke="#2d3247" stroke-width="1.2"/><rect x="630.3" y="31.5" width="1" height="16.5" fill="#b3b8cd"/><rect x="637.9" y="36.1" width="2.9" height="1" fill="#3c4150"/><rect x="641.8" y="36.1" width="7.100000000000023" height="1.1" fill="#4f5566"/><rect x="641.8" y="37.9" width="7.100000000000023" height="1.1" fill="#79a978"/><rect x="641.8" y="39.7" width="7.100000000000023" height="1.1" fill="#79a978"/><rect x="641.8" y="41.5" width="7.100000000000023" height="1.1" fill="#79a978"/><rect x="645" y="43.3" width="3.8999999999999773" height="1.1" fill="#4f5566"/><rect x="641.8" y="45.1" width="7.100000000000023" height="1.1" fill="#4f5566"/><path d="M657.4,36.2 Q661.6,34.6 661.8,38.2 Q661.6,40.4 658.6,42.4" fill="none" stroke="#2f62a8" stroke-width="1.3"/><path d="M655,34.2 L655.6,38.8 L659.2,36 Z" fill="#2f62a8"/><rect x="661.8" y="36.1" width="7.0" height="1.1" fill="#6a6f80"/><rect x="661.8" y="37.9" width="7.0" height="1.1" fill="#6a6f80"/><rect x="661.8" y="39.7" width="7.0" height="1.1" fill="#6a6f80"/><rect x="661.8" y="41.5" width="7.0" height="1.1" fill="#6a6f80"/><rect x="664" y="43.3" width="4.7999999999999545" height="1.1" fill="#6a6f80"/><rect x="661.8" y="45.1" width="7.0" height="1.1" fill="#6a6f80"/><rect x="675.3" y="31.5" width="1" height="16.5" fill="#b3b8cd"/><path d="M684.4,34.8 h8.2 v10.8 l-4.1,-3.6 l-4.1,3.6 Z" fill="#dfe2ee" stroke="#2d3247" stroke-width="1.4" stroke-linejoin="round"/><path d="M702.4,34.8 h8.2 v10.8 l-4.1,-3.6 l-4.1,3.6 Z" fill="none" stroke="#c3c7d6" stroke-width="1.2"/><path d="M720.8,34.8 h8.2 v10.8 l-4.1,-3.6 l-4.1,3.6 Z" fill="none" stroke="#c3c7d6" stroke-width="1.2"/><path d="M740.2,34.8 h8.2 v10.8 l-4.1,-3.6 l-4.1,3.6 Z" fill="none" stroke="#c3c7d6" stroke-width="1.2"/><path d="M700.6,40.2 h6 M718,40.2 h7" stroke="#c3c7d6" stroke-width="1.1"/><path d="M738.2,34.2 l3.6,3.6 M741.8,34.2 l-3.6,3.6" stroke="#c3c7d6" stroke-width="1"/><rect x="757.8" y="41.6" width="6.4" height="1" fill="#2d3247"/><path d="M757.8,43.6 L764.2,43.6 L761.0,46.8 Z" fill="#1e1e1e"/><path d="M290.4,72 h2.6 M293,69 v6 h0 M293,69.6 h3.4 v4.8 h-3.4 M296.4,72 h1" fill="none" stroke="#2d3247" stroke-width="1"/><path d="M306.4,68.4 L313.8,75.8 M313.8,68.4 L306.4,75.8" stroke="#2d3247" stroke-width="1.3"/><path d="M971.7,71 L977.8,71 L974.75,74.4 Z" fill="#e6ebfb"/><circle cx="990.9" cy="71.8" r="2.6" fill="none" stroke="#e6ebfb" stroke-width="1.5"/><circle cx="990.9" cy="71.8" r="3.9" fill="none" stroke="#e6ebfb" stroke-width="1.6" stroke-dasharray="1.53 1.53"/><path d="M298,90.4 L301.8,90.4 L299.9,92.6 Z" fill="#1e1e1e"/><path d="M632.6,90.4 L636.6,90.4 L634.6,92.6 Z" fill="#1e1e1e"/><path d="M968,90.4 L972.2,90.4 L970.1,92.6 Z" fill="#1e1e1e"/><g fill="#fbefcc" stroke="#a68e56" stroke-width="1"><rect x="312" y="86.2" width="6.4" height="3.4" transform="rotate(-45 315.2 87.9)"/><path d="M317.6,89.4 L320.8,91.4 M321.6,92.6 L321.6,93.4" stroke-width="1.2"/><rect x="321.1" y="88.2" width="3.6" height="3.6" transform="rotate(45 322.9 90)"/><rect x="320.5" y="93.4" width="3.6" height="3.6" transform="rotate(45 322.3 95.2)"/></g><path d="M653.2,85.8 L658.6,88.6 v5.8 L653.2,97 L647.8,94.4 v-5.8 Z" fill="#eadcf4" stroke="#9560c0" stroke-width="1"/><path d="M647.8,88.6 L653.2,91.3 L658.6,88.6 M653.2,91.3 v5.6" fill="none" stroke="#9560c0" stroke-width="1"/><path d="M982,90.6 h10 M982,92.8 h10 M986.9,88 v8" stroke="#2d3247" stroke-width="1.2"/><circle cx="986.9" cy="87.4" r="1.3" fill="#2d3247"/><circle cx="986.9" cy="96" r="1.3" fill="#2d3247"/><path d="M983.2,110.4 L989.6,110.4 L986.4000000000001,106.6 Z" fill="#8a8a90"/><path d="M983.4,464.4 L989.6,464.4 L986.5,468.6 Z" fill="#8a8a90"/><rect x="992.4" y="243.8" width="4" height="4" fill="#c3c3c9"/><rect x="992.4" y="309.8" width="4" height="4" fill="#c3c3c9"/><rect x="980" y="360" width="12.8" height="47.8" fill="#c9c9ce"/><rect x="977.4" y="374.2" width="4" height="30" fill="#fffbd8" stroke="#c2b46c" stroke-width="0.9"/><rect x="977" y="401.4" width="4.8" height="3.2" fill="#1e7b1e"/><rect x="977" y="381.2" width="19.7" height="1.6" fill="#12127e"/><rect x="992.2" y="383.3" width="4.5" height="5" fill="#e01a22"/><path d="M18.8,480.7 L23.6,480.7 L21.200000000000003,483.2 Z" fill="#1e1e1e"/><rect x="25.6" y="474.3" width="1" height="14.2" fill="#c6c8d2"/><path d="M32.2,482.6 Q30.6,476 35.6,476.2 Q39.8,476.6 39.2,481.2 Q38.8,483.4 37.2,484 L37.2,486.6 L33.4,486.6" fill="none" stroke="#8a5bc4" stroke-width="1.2"/><circle cx="35.4" cy="480.6" r="1.6" fill="none" stroke="#8a5bc4" stroke-width="0.9"/><path d="M29,484.4 l3.2,-1.2 l0.6,2.6 Z" fill="#8a5bc4"/><circle cx="71.1" cy="481" r="5" fill="#c81f2e"/><path d="M68.9,478.8 l4.4,4.4 M73.3,478.8 l-4.4,4.4" stroke="#fff" stroke-width="1.2"/><path d="M111.4,476.6 L116.4,486 L106.4,486 Z" fill="#b38c26"/><path d="M111.4,479.6 v3.3 M111.4,484 v1" stroke="#fff" stroke-width="1.1"/><path d="M158.6,477.2 v9 M154.8,480.8 l3.8,-3.8 l3.8,3.8" fill="none" stroke="#555a66" stroke-width="1.2"/><path d="M184,477 v9 M180.2,482.4 l3.8,3.8 l3.8,-3.8" fill="none" stroke="#555a66" stroke-width="1.2"/><rect x="202.6" y="476.4" width="1" height="11" fill="#c6c8d2"/><path d="M221.8,481.6 L226.8,475.8" stroke="#5e5e66" stroke-width="1.6"/><path d="M218.2,480.6 L222.8,482.6 L220.4,486.4 L215.6,484.4 Z" fill="#d9c183" stroke="#a88a3c" stroke-width="0.8"/><circle cx="217.2" cy="477.2" r="0.9" fill="#3a72c0"/><circle cx="220.2" cy="476" r="0.9" fill="#3a72c0"/><circle cx="216" cy="479.4" r="0.7" fill="#3a72c0"/><path d="M230.3,479.8 L236.3,479.8 L233.3,482.9 Z" fill="#1e1e1e"/><path d="M267.5,478.8 L262.5,481.8 L267.5,484.8 Z" fill="#8f8f96"/><path d="M809.8,478 L814.7,482.0 L809.8,486 Z" fill="#6f6f76"/><path d="M953.4,502.6 L960,502.6 L956.7,506 Z" fill="#dfe6fb"/><path d="M968.6,502.2 h5.6 M969.8,502.2 v4.4 h3.2 v-4.4 M968.6,506.6 h5.6 M971.4,506.6 v3.2" fill="none" stroke="#dfe6fb" stroke-width="1"/><path d="M982.8,501.2 L990,508.4 M990,501.2 L982.8,508.4" stroke="#dfe6fb" stroke-width="1.3"/><rect x="333.6" y="517.3" width="1" height="16.7" fill="#a9aec4"/><path d="M326,524.6 L330.4,524.6 L328.2,527 Z" fill="#1e1e1e"/><rect x="340.6" y="518" width="1" height="15.5" fill="#b0b5ca"/><rect x="366.5" y="518" width="1" height="15.5" fill="#b0b5ca"/><rect x="411.4" y="518" width="1" height="15.5" fill="#b0b5ca"/><rect x="436.9" y="518" width="1" height="15.5" fill="#b0b5ca"/><rect x="462.8" y="518" width="1" height="15.5" fill="#b0b5ca"/><path d="M349,528.4 v-6.8 q0,-1.6 1.6,-1.6 h1 q1.6,0 1.6,1.6 M347.4,529 h12 M348,531.6 h11.6" fill="none" stroke="#b3b7c8" stroke-width="1.1"/><path d="M373,522.4 h6 M375,520.6 l-2,1.8 l2,1.8 M373,527.4 h11.6 M373,530.4 h11.6" fill="none" stroke="#b3b7c8" stroke-width="1.1"/><path d="M395.6,522.4 h6 M399.6,520.6 l2,1.8 l-2,1.8 M391,527.4 h11.4 M391,530.4 h11.4" fill="none" stroke="#b3b7c8" stroke-width="1.1"/><path d="M418.2,519.4 l4.6,4.6 M422.8,519.4 l-4.6,4.6" stroke="#d0202c" stroke-width="1.2"/><path d="M424.6,519.8 h5.6 M424.6,522.2 h5.6 M424.6,524.6 h5.6 M418,527.4 h12.2 M418,530 h12.2" stroke="#3a3e4e" stroke-width="1.1"/><text x="443.4" y="525" font-family="Liberation Sans" font-weight="bold" font-size="6" fill="#333">ab</text><text x="443.4" y="531" font-family="Liberation Sans" font-weight="bold" font-size="6" fill="#333">c</text><path d="M455.6,524 v4.6 h-7" fill="none" stroke="#2e6bc4" stroke-width="1.3"/><path d="M447.4,528.6 l2.6,-2.2 v4.4 Z" fill="#2e6bc4"/><circle cx="475.8" cy="525.5" r="5.8" fill="none" stroke="#3a3e4e" stroke-width="1.3"/><path d="M475.6,522 v3.8 h2.8" fill="none" stroke="#3a3e4e" stroke-width="1.2"/><path d="M984.4,546.2 L990,546.2 L987.2,542.6 Z" fill="#8a8a90"/><path d="M984.4,673 L990,673 L987.2,676.8 Z" fill="#8a8a90"/><path d="M972,686 L975.6,689.0 L972,692 Z" fill="#c6c6cc"/><path d="M1000.8,706.2 v10 M996.8,710.2 l4,-4 l4,4" fill="none" stroke="#e8ecfb" stroke-width="1.1"/><path d="M1123,713.4 L1129.6,713.4 L1126.3,710.6 Z" fill="#e8ecfb"/><path d="M1149.8,708.2 h11.4 v2.4 h-11.4 Z M1150.8,710.6 v6 h9.4 v-6 M1153.4,712.6 v2.2 h4.2 v-2.2" fill="none" stroke="#e8ecfb" stroke-width="1"/><path d="M1253,713.4 L1259.8,713.4 L1256.4,710.6 Z" fill="#e8ecfb"/><circle cx="1015.7" cy="93.9" r="5.4" fill="none" stroke="#bfc3d3" stroke-width="1"/><path d="M1018.6,93.9 h-5.6 M1015,91.8 l-2.1,2.1 l2.1,2.1" fill="none" stroke="#bfc3d3" stroke-width="1"/><circle cx="1034.6" cy="93.9" r="5.4" fill="none" stroke="#bfc3d3" stroke-width="1"/><path d="M1031.8,93.9 h5.6 M1035.3,91.8 l2.1,2.1 l-2.1,2.1" fill="none" stroke="#bfc3d3" stroke-width="1"/><path d="M1047.8,95.2 L1053.8,89.6 L1059.8,95.2 M1049.4,93.8 v6.4 h3 v-3.6 h3 v3.6 h3 v-6.4" fill="none" stroke="#2d3247" stroke-width="1.2" stroke-linejoin="round"/><rect x="1072" y="88.8" width="7.4" height="9.6" fill="#e6e8f0" stroke="#2d3247" stroke-width="1.1"/><path d="M1074,91.4 h3.4 M1074,93.4 h3.4 M1074,95.4 h3.4" stroke="#2d3247" stroke-width="0.8"/><path d="M1066,94.2 L1067.6,93.4 L1070.6,95.8 L1074.2,92.4 L1075.6,93 V100.4 L1074.2,101 L1070.6,97.6 L1067.6,100 L1066,99.2 Z M1067.6,95 V98.4 L1069.4,96.7 Z M1074,94.6 L1071.8,96.7 L1074,98.8 Z" fill="#8a3cc8" fill-rule="evenodd"/><rect x="1086" y="86" width="1" height="15.5" fill="#b0b5ca"/><circle cx="1099.6" cy="94.4" r="5" fill="none" stroke="#2d3247" stroke-width="1.3"/><path d="M1099.4,91.4 v3.4 h2.6" fill="none" stroke="#2d3247" stroke-width="1.1"/><path d="M1092.6,87 h4.6 l-2.3,2.6 Z" fill="#3a72c0"/><path d="M1112,93 L1116.6,93 L1114.3,95.4 Z" fill="#1e1e1e"/><path d="M1122.8,91.8 h11 M1131.4,89.6 l2.4,2.2 M1133.6,95.8 h-11 M1125.2,98 l-2.4,-2.2" fill="none" stroke="#2d3247" stroke-width="1.2"/><rect x="1142" y="88.2" width="10.6" height="12" rx="1" fill="#e6e8f0" stroke="#2d3247" stroke-width="1.2"/><path d="M1143.2,87.6 h10.6 v11" fill="none" stroke="#2d3247" stroke-width="0.8"/><path d="M1144.6,94.2 h5.6" stroke="#2d3247" stroke-width="1.4"/><rect x="1160.4" y="91.6" width="7.6" height="8.8" rx="1" fill="#e6e8f0" stroke="#4d5263" stroke-width="1.1"/><rect x="1164.2" y="88" width="7.6" height="8.8" rx="1" fill="#e6e8f0" stroke="#4d5263" stroke-width="1.1"/><rect x="1162.8" y="94" width="3" height="4" fill="#9aa0b4"/><rect x="1179" y="85" width="1" height="17" fill="#b0b5ca"/><rect x="1183.8" y="84.8" width="18.40000000000009" height="18.4" fill="#fdebc4" stroke="#d9b978" stroke-width="1"/><rect x="1238.5" y="84.8" width="18.5" height="18.4" fill="#fdebc4" stroke="#d9b978" stroke-width="1"/><circle cx="1187.6" cy="89" r="1.5" fill="#2d3247"/><circle cx="1192.4" cy="93.2" r="1.6" fill="none" stroke="#2d3247" stroke-width="1"/><rect x="1194.6" y="96" width="3.8" height="3.2" fill="none" stroke="#2d3247" stroke-width="1"/><path d="M1188.6,90.2 L1191.2,92.2 M1193.6,94.6 L1195.2,96" stroke="#2d3247" stroke-width="0.9"/><path d="M1205,93 L1209.7,93 L1207.35,95.4 Z" fill="#1e1e1e"/><rect x="1215.5" y="85" width="1" height="17" fill="#b0b5ca"/><path d="M1223,100.4 L1229.6,93.8" stroke="#5e6272" stroke-width="2"/><path d="M1229.4,94.2 Q1227.4,91.6 1229.8,89.4 Q1232,87.6 1234.4,88.4 L1232.4,90.6 L1233.2,92 L1234.8,92.4 L1236.2,90.4 Q1236.8,93 1234.6,94.6 Q1232,96.2 1229.4,94.2 Z" fill="#2d3247"/><path d="M1241.6,97.6 h10 l-1.4,-2.6 h-7.2 Z" fill="#fdebc4" stroke="#2d3247" stroke-width="1"/><path d="M1243,97.8 h8" stroke="#2d3247" stroke-width="1.4"/><path d="M1252.6,91.2 l1.2,-1 M1254.4,93.6 h1.6 M1250.6,89.6 v-1.4" stroke="#c8a040" stroke-width="0.9"/><rect x="1005.9" y="473.1" width="19.6" height="18.9" fill="#fdebc4" stroke="#d9b978" stroke-width="1"/><rect x="1009" y="476.4" width="3.2" height="3" fill="none" stroke="#2d3247" stroke-width="0.9"/><rect x="1009" y="485.2" width="3.2" height="3" fill="none" stroke="#2d3247" stroke-width="0.9"/><rect x="1014.2" y="476" width="6.6" height="13" fill="#8c8fb0"/><path d="M1014.2,488.6 h8" stroke="#2d3247" stroke-width="1"/><text x="1030" y="481.4" font-family="Liberation Sans" font-weight="bold" font-size="6.4" fill="#2d3247">A</text><text x="1030" y="488.6" font-family="Liberation Sans" font-weight="bold" font-size="6.4" fill="#2d3247">Z</text><path d="M1039.8,477.2 v9.6 M1036.8,484 l3,3 l3,-3" fill="none" stroke="#2e6bc4" stroke-width="1.5"/><rect x="1048.5" y="474.5" width="1" height="16.5" fill="#b0b5ca"/><path d="M1055.4,489.4 L1061.4,483.4" stroke="#9a9ca8" stroke-width="2"/><path d="M1061.2,483.8 Q1059.2,481.2 1061.6,479 Q1063.8,477.2 1066.2,478 L1064.2,480.2 L1065,481.6 L1066.6,482 L1068,480 Q1068.6,482.6 1066.4,484.2 Q1063.8,485.8 1061.2,483.8 Z" fill="#9a9ca8"/><path d="M248,386.7 Q248,386.5 248.3,386.5 H253.4 Q254.2,386.9 254.2,387.6 Q254.2,386.9 255,386.5 H260.1 Q260.4,386.5 260.4,386.7 V389.5 H256.4 V410.5 H260.4 V413.3 Q260.4,413.5 260.1,413.5 H255 Q254.2,413.1 254.2,412.4 Q254.2,413.1 253.4,413.5 H248.3 Q248,413.5 248,413.3 V410.5 H252.2 V389.5 H248 Z" fill="#e2e2e4" stroke="#1a1a1a" stroke-width="1.3" stroke-linejoin="round"/></svg>
</body></html>
